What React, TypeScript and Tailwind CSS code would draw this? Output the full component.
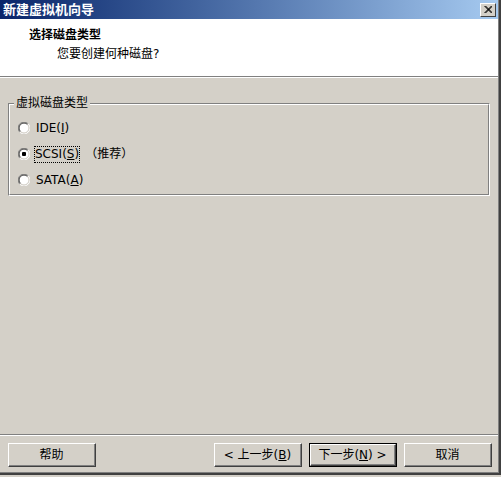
import React from 'react';

const font = "font-['DejaVu_Sans','Noto_Sans_CJK_SC',sans-serif]";

const Radio = ({ checked }: { checked?: boolean }) => (
  <svg width="12" height="12" viewBox="0 0 12 12" className="shrink-0">
    <circle cx="6" cy="6" r="5" fill="#ffffff" />
    {/* outer ring: gray top-left, white bottom-right */}
    <path d="M10.2 1.8 A5.5 5.5 0 0 0 1.8 10.2" fill="none" stroke="#808080" strokeWidth="1" />
    <path d="M1.8 10.2 A5.5 5.5 0 0 0 10.2 1.8" fill="none" stroke="#ffffff" strokeWidth="1" />
    {/* inner ring: dark top-left, light bottom-right */}
    <path d="M9.5 2.5 A4.5 4.5 0 0 0 2.5 9.5" fill="none" stroke="#404040" strokeWidth="1" />
    <path d="M2.5 9.5 A4.5 4.5 0 0 0 9.5 2.5" fill="none" stroke="#d4d0c8" strokeWidth="1" />
    {checked && <rect x="4" y="4" width="4" height="4" rx="1" fill="#000000" />}
  </svg>
);

const Button = ({ children, isDefault }: { children: React.ReactNode; isDefault?: boolean }) => {
  const face = (
    <div className="h-full border-t border-l border-t-white border-l-white border-r border-b border-r-[#404040] border-b-[#404040]">
      <div className="h-full flex items-center justify-center border-r border-b border-r-[#808080] border-b-[#808080] leading-[16px]">
        {children}
      </div>
    </div>
  );
  return (
    <div className={`w-[88px] h-[24px] ${isDefault ? 'border border-black' : ''}`}>{face}</div>
  );
};

export default function App() {
  return (
    <div className={`w-[501px] h-[477px] bg-[#d4d0c8] text-[12px] text-black ${font}`}>
      <div className="w-[501px] h-[475px] border-r-2 border-b-2 border-[#404040]">
        <div className="h-full flex flex-col border-r border-b border-[#808080]">
          {/* Title bar */}
          <div className="h-[19px] shrink-0 flex items-center justify-between pl-[3px] pr-[2px] bg-linear-to-r from-[#0a246a] to-[#a6caf0]">
            <span className="text-white font-bold text-[13px] leading-[16px]">新建虚拟机向导</span>
            <div className="w-[16px] h-[14px] bg-[#d4d0c8] border-t border-l border-white border-r border-b border-r-[#404040] border-b-[#404040] flex items-center justify-center">
              <svg width="8" height="7" viewBox="0 0 8 7">
                <path d="M0.5 0 L7.5 7 M1.5 0 L8.5 7 M7.5 0 L0.5 7 M8.5 0 L1.5 7" stroke="#000" strokeWidth="1" />
              </svg>
            </div>
          </div>

          {/* Header */}
          <div className="h-[57px] shrink-0 bg-white pl-[29px] pt-[8px]">
            <div className="font-bold leading-[16px]">选择磁盘类型</div>
            <div className="leading-[16px] mt-[3px] pl-[28px]">您要创建何种磁盘?</div>
          </div>
          <div className="h-px shrink-0 bg-[#808080]" />
          <div className="h-px shrink-0 bg-white" />

          {/* Body */}
          <div className="flex-1 pt-[25px] px-[8px]">
            <div className="relative border-t border-l border-t-[#808080] border-l-[#808080] border-r border-b border-r-white border-b-white">
              <span className="absolute -top-[9px] left-[5px] px-[2px] bg-[#d4d0c8] leading-[16px]">虚拟磁盘类型</span>
              <div className="border-t border-l border-t-white border-l-white border-r border-b border-r-[#808080] border-b-[#808080] pt-[10px] pb-[1px] pl-[8px]">
                <div className="h-[26px] flex items-center gap-[5px]">
                  <Radio />
                  <span className="leading-[16px] px-px">
                    IDE(<span className="underline">I</span>)
                  </span>
                </div>
                <div className="h-[26px] flex items-center gap-[4px]">
                  <Radio checked />
                  <span className="leading-[15px] border border-dotted border-black">
                    SCSI(<span className="underline">S</span>)
                  </span>
                  <span className="leading-[16px] ml-[1px]">（推荐）</span>
                </div>
                <div className="h-[26px] flex items-center gap-[5px]">
                  <Radio />
                  <span className="leading-[16px] px-px">
                    SATA(<span className="underline">A</span>)
                  </span>
                </div>
              </div>
            </div>
          </div>

          {/* Footer */}
          <div className="h-px shrink-0 bg-[#808080]" />
          <div className="h-px shrink-0 bg-white" />
          <div className="shrink-0 flex pt-[7px] pb-[5px] pl-[8px] pr-[6px]">
            <Button>帮助</Button>
            <div className="flex-1" />
            <div className="flex gap-[7px]">
              <Button>
                &lt; 上一步(<span className="underline">B</span>)
              </Button>
              <Button isDefault>
                下一步(<span className="underline">N</span>) &gt;
              </Button>
              <Button>取消</Button>
            </div>
          </div>
        </div>
      </div>
    </div>
  );
}
